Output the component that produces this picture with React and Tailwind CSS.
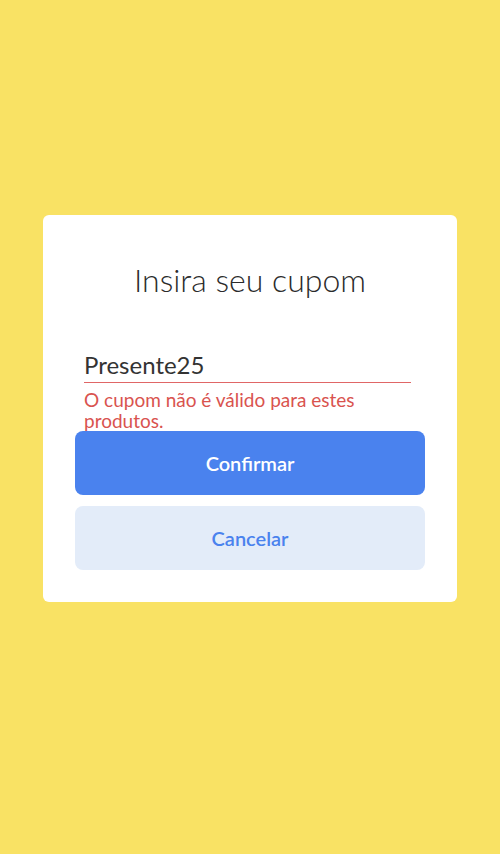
import React, { useState } from "react";

const App = () => {
  const [code, setCode] = useState("Presente25");

  return (
    <div
      className="min-h-screen bg-[#F9E264] px-[43px] pt-[215px]"
      style={{ fontFamily: "Lato, 'Open Sans', sans-serif" }}
    >
      <div className="bg-white rounded-md px-8 pt-[47px] pb-8">
        <h2 className="text-center text-[32px] font-light leading-9 text-[#2b2b2b]">
          Insira seu cupom
        </h2>

        {/* Input */}
        <div className="mt-[53px] pl-[9px] pr-[14px]">
          <input
            value={code}
            onChange={(e) => setCode(e.target.value)}
            className="w-full bg-transparent pb-[3px] text-[24px] leading-[28px] text-[#333333] outline-none"
          />
          <div className="h-px bg-[#E06666]" />
          <p className="mt-[6px] text-[19px] leading-[21px] text-[#D9534F]">
            O cupom não é válido para estes produtos.
          </p>
        </div>

        {/* Actions */}
        <div className="flex flex-col gap-[11px]">
          <button className="h-16 rounded-lg bg-[#4A82EE] text-[20px] font-semibold text-white">
            Confirmar
          </button>
          <button className="h-16 rounded-lg bg-[#E3ECF9] text-[20px] font-semibold text-[#4A82EE]">
            Cancelar
          </button>
        </div>
      </div>
    </div>
  );
};

export default App;
